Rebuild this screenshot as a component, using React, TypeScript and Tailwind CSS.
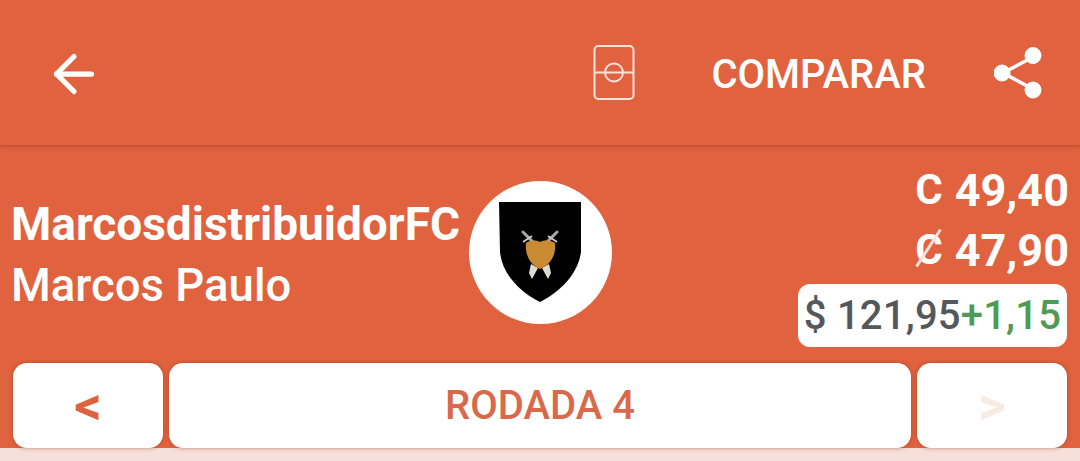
import React from "react";
import { ArrowLeft } from "lucide-react";

function PitchIcon() {
  return (
    <svg width="42" height="56" viewBox="0 0 42 56" fill="none" stroke="#fbe3da" strokeWidth="2">
      <rect x="1.500" y="1" width="39" height="53" rx="4" />
      <path d="M1.500 27.500H40.500" />
      <circle cx="21" cy="27.500" r="9" />
    </svg>
  );
}

function ShareIcon() {
  return (
    <svg width="48" height="54" viewBox="0 0 48 54" fill="white" stroke="white">
      <path d="M39 11 9 27l30 16" fill="none" strokeWidth="3.500" />
      <circle cx="39" cy="9.500" r="8" />
      <circle cx="8" cy="27" r="8" />
      <circle cx="39" cy="44" r="8" />
    </svg>
  );
}

function Crest() {
  return (
    <svg width="84" height="101" viewBox="0 0 84 101" className="mr-[2px]">
      <path d="M1 0H83V50C80 72 62 90 42 100C22 90 4 72 2 50Z" fill="#000" />
      <path d="M25 30 35 40M59 30 49 40" stroke="#a8a8a8" strokeWidth="3" strokeLinecap="round" />
      <path d="M25 40 34 34M59 40 50 34" stroke="#c8c8c8" strokeWidth="2" />
      <path d="M33 62 40 66 34 77 31 71ZM51 62 44 66 50 77 53 71Z" fill="#dedbd0" />
      <path d="M28 41C33 38 37 38 42 40C47 38 51 38 57 41C58 52 54 62 42 67C31 62 27 52 28 41Z" fill="#c88b32" />
    </svg>
  );
}

function Stat({ value, struck }: { value: string; struck?: boolean }) {
  return (
    <div className="flex items-center justify-end gap-[12px] h-[60px] -mr-[2px] text-[45px] font-bold text-white">
      <span className="relative text-[42px] leading-none">
        C
        {struck && (
          <span className="absolute left-[12px] top-[-3px] h-[44px] w-[3px] bg-[#fbe3da] rotate-[33deg]" />
        )}
      </span>
      <span className="leading-none">{value}</span>
    </div>
  );
}

function NavButton({ label, className }: { label: string; className: string }) {
  return (
    <button className="w-[150px] h-[85px] rounded-[14px] bg-white font-bold text-[54px] leading-none shadow-[0_0_4px_rgba(150,60,30,0.6)] flex items-center justify-center">
      <span className={className}>{label}</span>
    </button>
  );
}

export default function App() {
  return (
    <div className="w-[1080px] h-[461px] overflow-hidden bg-[#f7e0d9] font-['Roboto',sans-serif]">
      <div className="h-[448px] bg-[#e0623e]">
        <header className="h-[145px] flex items-center shadow-[0_2px_3px_rgba(160,60,30,0.45)] text-white">
          <ArrowLeft className="ml-[44px] mt-[2px] w-[60px] h-[60px]" strokeWidth={2.1} />
          <div className="ml-auto">
            <PitchIcon />
          </div>
          <span className="ml-[76px] mt-[4px] text-[40px] font-medium">COMPARAR</span>
          <div className="ml-[68px] mr-[38px]">
            <ShareIcon />
          </div>
        </header>

        <section className="h-[218px] flex text-white">
          <div className="w-[469px] pl-[11px] pt-[48px] whitespace-nowrap">
            <p className="text-[46px] font-bold leading-[62px]">MarcosdistribuidorFC</p>
            <p className="text-[45.500px] font-medium leading-[62px]">Marcos Paulo</p>
          </div>
          <div className="mt-[36px] w-[143px] h-[143px] rounded-full bg-white flex items-center justify-center">
            <Crest />
          </div>
          <div className="ml-auto w-[269px] pt-[15px] mr-[13px] flex flex-col">
            <Stat value="49,40" />
            <Stat value="47,90" struck />
            <div className="mt-[4px] h-[63px] rounded-[12px] bg-white flex items-center justify-center text-[40px] tracking-[0.2px] font-medium text-[#55585a] whitespace-nowrap">
              $ 121,95<span className="text-[#4f9a55]">+1,15</span>
            </div>
          </div>
        </section>

        <nav className="flex gap-[6px] px-[13px]">
          <NavButton label="<" className="text-[#de6341]" />
          <button className="flex-1 h-[85px] rounded-[14px] bg-white text-[40px] font-medium text-[#d9694a] shadow-[0_0_4px_rgba(150,60,30,0.6)]">
            RODADA 4
          </button>
          <NavButton label=">" className="text-[#f8ebe5]" />
        </nav>
      </div>
    </div>
  );
}
